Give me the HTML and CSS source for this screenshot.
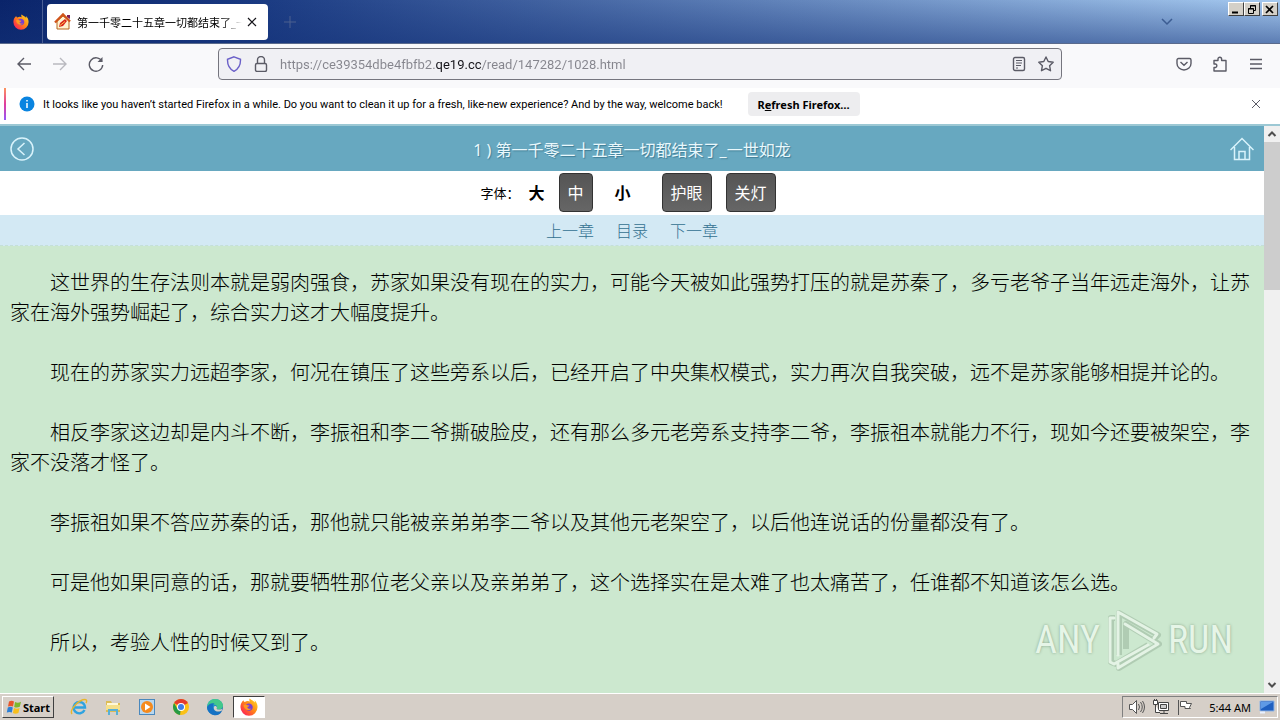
FILE: index.html
```html
<!DOCTYPE html>
<html lang="zh-CN">
<head>
  <meta charset="utf-8">
  <meta name="viewport" content="width=device-width, initial-scale=1.0">
  <title>第一千零二十五章一切都结束了_一世如龙</title>
  <link rel="stylesheet" href="styles.css">
</head>
<body>
  <!-- Gradients shared by the icons -->
  <svg class="defs" width="0" height="0" aria-hidden="true">
    <defs>
      <linearGradient id="foxFire" x1="1" y1="0" x2="0" y2="1">
        <stop offset="0" stop-color="#ffe226"/>
        <stop offset="0.45" stop-color="#ff8a16"/>
        <stop offset="0.8" stop-color="#ff3647"/>
        <stop offset="1" stop-color="#e31587"/>
      </linearGradient>
      <linearGradient id="edgeBlue" x1="0" y1="0" x2="1" y2="1">
        <stop offset="0" stop-color="#2fb4e8"/>
        <stop offset="1" stop-color="#0c59a4"/>
      </linearGradient>
      <symbol id="firefox" viewBox="0 0 16 16">
        <path d="M8.6.4c-.6 1-.4 2 .4 2.8C7.600 2.500 5.600 2.500 4.300 3.600 3.600 3.300 3.300 2.700 3.200 1.900 1.400 3.200.4 5.500.4 8.100a7.600 7.600 0 0 0 15.200 0c0-2.700-1-4.900-2.700-6.200.3.800.4 1.500.3 2.200C12.400 2.300 10.300 2 8.600.4z" fill="url(#foxFire)"/>
        <path d="M5 6.300c1.200-1.500 3.500-2 5-.8 1.900 1.500 1.700 4.200-.2 5.300-2 1.100-4.500.1-5.200-1.800-.3-1 0-2 .4-2.700z" fill="#7a3fd0"/>
        <path d="M3.200 6.200c1.300-.8 2.600-.5 3.400.2l1.700.3c-.1.800-1 1.200-1.800 1.400.2 1.400 1.800 2 3.500 1.200-.9 1.600-3.400 2-5 .6-1.200-1-1.900-2.300-1.800-3.700z" fill="#ff9a1f"/>
      </symbol>
    </defs>
  </svg>

  <!-- Tab strip -->
  <header class="titlebar">
    <button class="fx-view" aria-label="Firefox View"><svg width="16" height="16"><use href="#firefox"/></svg></button>
    <div class="tab">
      <svg width="18" height="18" viewBox="0 0 18 18">
        <path d="M3 8v8h12V7L9 3z" fill="#fff3cf" stroke="#b5651d"/>
        <path d="M1 9.500L9 1.500l7 7" fill="none" stroke="#d0541a" stroke-width="2.400"/>
        <path d="M5 14l1-4 5-4 2 2-4 5z" fill="#d8261c"/>
        <path d="M6 12.500l5-4" stroke="#ffc24a"/>
        <path d="M13 2h3v4l-3-2z" fill="#7d1f58"/>
      </svg>
      <span class="tab-title">第一千零二十五章一切都结束了_一世如龙</span>
      <button class="tab-close" aria-label="Close tab"><svg width="10" height="10" viewBox="0 0 10 10"><path d="M1 1l8 8M9 1L1 9" stroke="#15141a" stroke-width="1.200"/></svg></button>
    </div>
    <button class="new-tab" aria-label="New tab"><svg width="12" height="12" viewBox="0 0 12 12"><path d="M6 0v12M0 6h12" stroke="#4c608f"/></svg></button>
    <button class="all-tabs" aria-label="List all tabs"><svg width="12" height="8" viewBox="0 0 12 8"><path d="M1 1l5 5 5-5" fill="none" stroke="#3c5c92" stroke-width="1.500"/></svg></button>
    <div class="win-buttons">
      <button aria-label="Minimize"><svg width="10" height="9" viewBox="0 0 10 9"><path d="M1 7.500h6" stroke="#000" stroke-width="2"/></svg></button>
      <button aria-label="Restore"><svg width="10" height="9" viewBox="0 0 10 9" fill="none" stroke="#000"><path d="M3.500 3V.500h5v5H7M3 1h6M1.500 3.500h5v5h-5zM1 4h6"/></svg></button>
      <button class="win-close" aria-label="Close"><svg width="10" height="9" viewBox="0 0 10 9"><path d="M1 1l7 7M8 1L1 8" stroke="#000" stroke-width="1.700"/></svg></button>
    </div>
  </header>

  <!-- Navigation toolbar -->
  <nav class="toolbar">
    <div class="nav-buttons">
      <button aria-label="Back"><svg width="16" height="16" viewBox="0 0 16 16"><path d="M15 8H2M8 2L2 8l6 6"/></svg></button>
      <button class="off" aria-label="Forward" disabled><svg width="16" height="16" viewBox="0 0 16 16"><path d="M1 8h13M8 2l6 6-6 6"/></svg></button>
      <button aria-label="Reload"><svg width="16" height="16" viewBox="0 0 16 16"><path d="M14 5.500A6.700 6.700 0 1 0 14.700 9"/><path d="M14.500 1v5h-5z" fill="#5b5b66" stroke="none"/></svg></button>
    </div>
    <div class="urlbar">
      <svg class="shield" width="16" height="16" viewBox="0 0 16 16"><path d="M8 .8l6.500 2.500c.2 5.700-2 9.800-6.500 12-4.500-2.200-6.700-6.300-6.500-12z"/></svg>
      <svg width="14" height="16" viewBox="0 0 14 16"><rect x="1.500" y="7.500" width="11" height="8" rx="1.500"/><path d="M3.500 7V4a3.500 3.500 0 0 1 7 0v3"/></svg>
      <input type="text" class="url" aria-label="Address" value="https://ce39354dbe4fbfb2.qe19.cc/read/147282/1028.html">
      <button aria-label="Reader view"><svg width="14" height="16" viewBox="0 0 14 16"><rect x="1.500" y="1.500" width="11" height="13" rx="1.500"/><path d="M4 4.500h6M4 7h6M4 9.500h5M4 12h2" stroke-width="1.200"/></svg></button>
      <button aria-label="Bookmark this page"><svg width="16" height="16" viewBox="0 0 16 16"><path d="M8 1l2.200 4.500 5 .7-3.600 3.500.9 5L8 12.300l-4.500 2.400.9-5L.8 6.200l5-.7z" stroke-linejoin="round"/></svg></button>
    </div>
    <div class="tools">
      <button aria-label="Save to Pocket"><svg width="16" height="16" viewBox="0 0 16 16"><path d="M2.500 2.500h11a1.500 1.500 0 0 1 1.500 1.500v3.500a7 6.500 0 0 1-14 0V4a1.500 1.500 0 0 1 1.500-1.500zM4.500 6L8 9.300 11.500 6"/></svg></button>
      <button aria-label="Extensions"><svg width="16" height="16" viewBox="0 0 16 16"><path d="M2 15V11.500h1.500a1.800 1.800 0 0 0 0-3.500H2V4.500h4V3a1.800 1.800 0 0 1 3.600 0v1.500H14V15z" stroke-linejoin="round"/></svg></button>
      <button aria-label="Menu"><svg width="16" height="16" viewBox="0 0 16 16"><path d="M2 3.500h12M2 8h12M2 12.500h12"/></svg></button>
    </div>
  </nav>

  <!-- Notification bar -->
  <div class="infobar">
    <svg width="16" height="16" viewBox="0 0 16 16"><circle cx="8" cy="8" r="7.500" fill="#0a84e0"/><path d="M8 7v5M8 4v1.500" stroke="#fff" stroke-width="1.500"/></svg>
    <span>It looks like you haven’t started Firefox in a while. Do you want to clean it up for a fresh, like-new experience? And by the way, welcome back!</span>
    <button class="refresh">R<u>e</u>fresh Firefox…</button>
    <button class="info-close" aria-label="Dismiss"><svg width="10" height="10" viewBox="0 0 10 10"><path d="M1 1l8 8M9 1L1 9" stroke="#5b5b66"/></svg></button>
  </div>

  <div class="viewport">
    <main class="page">
      <div class="page-head">
        <a href="#" aria-label="返回"><svg width="24" height="24" viewBox="0 0 24 24"><circle cx="12" cy="12" r="11"/><path d="M14.500 6L8 12l6.500 6"/></svg></a>
        <h1>1 ) 第一千零二十五章一切都结束了_一世如龙</h1>
        <a href="#" aria-label="首页"><svg width="24" height="24" viewBox="0 0 24 24"><path d="M.500 13L12 1.500 23.500 13M4.500 10v12.500h15V10M9 22v-7.500h6V22"/></svg></a>
      </div>
      <div class="settings">
        <span>字体：</span>
        <button class="size">大</button>
        <button class="size on">中</button>
        <button class="size">小</button>
        <button class="mode">护眼</button>
        <button class="mode">关灯</button>
      </div>
      <div class="chapter-nav">
        <a href="#">上一章</a>
        <a href="#">目录</a>
        <a href="#">下一章</a>
      </div>
      <article class="content">
        <p>这世界的生存法则本就是弱肉强食，苏家如果没有现在的实力，可能今天被如此强势打压的就是苏秦了，多亏老爷子当年远走海外，让苏家在海外强势崛起了，综合实力这才大幅度提升。</p>
        <p>现在的苏家实力远超李家，何况在镇压了这些旁系以后，已经开启了中央集权模式，实力再次自我突破，远不是苏家能够相提并论的。</p>
        <p>相反李家这边却是内斗不断，李振祖和李二爷撕破脸皮，还有那么多元老旁系支持李二爷，李振祖本就能力不行，现如今还要被架空，李家不没落才怪了。</p>
        <p>李振祖如果不答应苏秦的话，那他就只能被亲弟弟李二爷以及其他元老架空了，以后他连说话的份量都没有了。</p>
        <p>可是他如果同意的话，那就要牺牲那位老父亲以及亲弟弟了，这个选择实在是太难了也太痛苦了，任谁都不知道该怎么选。</p>
        <p>所以，考验人性的时候又到了。</p>
      </article>
    </main>
    <div class="scrollbar">
      <svg width="16" height="16" viewBox="0 0 16 16"><path d="M4.500 10L8 6.500l3.500 3.500"/></svg>
      <div class="thumb"></div>
      <svg class="down" width="16" height="16" viewBox="0 0 16 16"><path d="M4.500 6L8 9.500 11.500 6"/></svg>
    </div>
    <div class="watermark">
      <span>ANY</span>
      <svg width="56" height="62" viewBox="0 0 56 62">
        <g fill="none" stroke="#86a38a" stroke-opacity=".4" stroke-width="6" stroke-linejoin="round">
          <path d="M9 9H5v44l5 2 32-19M13 46V4l39 22-4 4M13 54v5l40-24-33-20v25"/>
        </g>
        <g fill="none" stroke="#e4f3e5" stroke-width="3" stroke-linejoin="round" stroke-linecap="round">
          <path d="M8 9H4v44l4 2 34-19M12 46V3l39 22-3 4M12 55v4l40-24-33-20"/>
        </g>
      </svg>
      <span>RUN</span>
    </div>
  </div>

  <!-- Windows taskbar -->
  <footer class="taskbar">
    <button class="start">
      <svg width="16" height="16" viewBox="0 0 16 16"><path d="M3 2.500c2-1 3.500-.8 5 0L7 7.500c-1.500-.8-3-.8-5 0z" fill="#e8552b"/><path d="M9 3c2 1 4 .8 6-.2l-1.200 5c-2 1-4 1-5.600.2z" fill="#7db82c"/><path d="M1.800 8.500c2-1 3.500-.8 5 0l-1 5c-1.500-.8-3-.8-5 0z" fill="#2c7fd6"/><path d="M8 9c2 1 3.800.9 5.600 0l-1.200 5c-2 1-4 .8-5.500 0z" fill="#f8bf1c"/></svg>
      Start
    </button>
    <div class="quick">
      <button aria-label="Internet Explorer"><svg width="18" height="18" viewBox="0 0 18 18"><path d="M14.500 12A5.700 5.700 0 1 1 15 9.500H5" fill="none" stroke="#2fa3e0" stroke-width="2.400"/><path d="M2 16C-1 12 9 1.500 15 1.500c2 0 2 2 1 3.500" fill="none" stroke="#e8b62a" stroke-width="1.400"/></svg></button>
      <button aria-label="Explorer"><svg width="18" height="18" viewBox="0 0 18 18"><path d="M2 3h5l1 2h8v9H2z" fill="#dcbc55"/><path d="M3 5h11v3H3z" fill="#fff8d8"/><path d="M2 7h14v5H2z" fill="#f5e08c"/><path d="M4 17v-6h10v6h-2v-4H6v4z" fill="#58b0d6"/></svg></button>
      <button aria-label="Media Player"><svg width="18" height="18" viewBox="0 0 18 18"><rect x="1.500" y="1.500" width="15" height="15" fill="#b9d7ee" stroke="#4a88bd"/><circle cx="9" cy="9" r="6" fill="#f58a1d"/><path d="M7 5.500v7l5.500-3.500z" fill="#fff"/></svg></button>
      <button aria-label="Chrome"><svg width="18" height="18" viewBox="0 0 18 18"><circle cx="9" cy="9" r="8" fill="#fbc116"/><path d="M9 9L2.100 5A8 8 0 0 1 15.900 5z" fill="#e33b2e"/><path d="M9 9l-1 8A8 8 0 0 1 2.100 5l3.400 6z" fill="#269a45"/><circle cx="9" cy="9" r="4" fill="#fff"/><circle cx="9" cy="9" r="3" fill="#3e7de8"/></svg></button>
      <button aria-label="Edge"><svg width="18" height="18" viewBox="0 0 18 18"><circle cx="9" cy="9" r="8" fill="url(#edgeBlue)"/><path d="M1 9C2 3 5.500 1 9 1c5 0 8 3.500 8 6.500 0 3-2.500 4-4.500 4-2 0-2.500-.8-1.500-2 .5-2.500-3-4-6-2.500C3 7.800 1.500 9 1 9z" fill="#43c88c"/><path d="M1 9c1.500-3.500 5-4.500 7.500-3.500C6 7 6 13 11 14c2 .4 4 0 5-1-2 4-6 5-9 3.700C3.500 15.500 1 12.500 1 9z" fill="#1672c4"/><path d="M8 8.500c-1 3 1.500 5 4 5 2 0 3-.5 4.500-1.500l-1-1c-3 1.500-6 0-4.500-1.500-.3-1.500-2-2-3-1z" fill="#d6d1ca"/></svg></button>
      <button class="active" aria-label="Firefox"><svg width="18" height="18"><use href="#firefox"/></svg></button>
    </div>
    <div class="tray">
      <svg width="18" height="18" viewBox="0 0 18 18" fill="#fff" stroke="#555"><path d="M1.500 6.500h3l4-4v13l-4-4h-3z"/><path d="M10.500 6q2 3 0 6M12.500 4q3.500 5 0 10M14.500 3q4 6 0 12" fill="none"/></svg>
      <svg width="18" height="18" viewBox="0 0 18 18" fill="#fff" stroke="#444"><path d="M6.500 4.500h10v8h-10z"/><path d="M8.500 6.500h6v4h-6z" fill="#ccc"/><path d="M8 15.500h8M12 13v2M1.500 2.500h4v4h-4zM3.500 7v7.500H8M2.500 1v2M4.500 1v2"/></svg>
      <svg width="18" height="18" viewBox="0 0 18 18" fill="#fff" stroke="#555"><path d="M2.500 17V2M4.500 3.500h6v2h5l-2 4 1 1H9v-2H4.500z"/></svg>
      <time>5:44 AM</time>
      <svg width="16" height="14" viewBox="0 0 16 14"><path d="M1 1h14v10H1z" fill="#1f5fc0" stroke="#8fb4e4"/><path d="M2 2h12L2 9z" fill="#5f9ae6"/><path d="M1 12.500h5" stroke="#e8f0ff" stroke-width="2"/></svg>
    </div>
  </footer>
</body>
</html>
```
FILE: styles.css
```css
* {
  box-sizing: border-box;
}

body {
  margin: 0;
  height: 100vh;
  display: flex;
  flex-direction: column;
  overflow: hidden;
  font-family: "Noto Sans", "Noto Sans CJK SC", sans-serif;
  font-size: 11px;
  color: #000;
}

.defs {
  position: absolute;
}

button {
  display: flex;
  align-items: center;
  justify-content: center;
  padding: 0;
  border: none;
  background: none;
  font-family: inherit;
  color: inherit;
}

svg {
  flex: none;
}

/* Tab strip */
.titlebar {
  flex: none;
  display: flex;
  height: 44px;
  background: linear-gradient(to bottom, rgba(20, 50, 120, 0) 0%, rgba(20, 50, 120, 0.5) 100%),
    linear-gradient(to right, #0a246a, #1a3a82 20%, #a6caf0);
  border-bottom: 1px solid #5a6a8c;
}

.fx-view {
  width: 43px;
  border-right: 1px solid #4a5f95;
}

.tab {
  display: flex;
  align-items: center;
  gap: 5px;
  width: 221px;
  height: 36px;
  margin: 4px;
  padding: 0 11px 0 7px;
  background: #fff;
  border-radius: 4px;
}

.tab-title {
  flex: 1;
  overflow: hidden;
  white-space: nowrap;
  mask-image: linear-gradient(to right, #000 88%, transparent);
}

.new-tab {
  width: 36px;
}

.all-tabs {
  width: 30px;
  margin-left: auto;
}

.win-buttons {
  display: flex;
  margin: 2px 2px 0 46px;
}

.win-buttons button {
  width: 16px;
  height: 14px;
  background: #d4d0c8;
  border: 1px solid;
  border-color: #fff #404040 #404040 #fff;
}

.win-buttons .win-close {
  margin-left: 2px;
}

/* Navigation toolbar */
.toolbar {
  flex: none;
  display: flex;
  align-items: center;
  height: 44px;
  padding: 0 16px 4px;
  background: #f9f9fb;
}

.toolbar svg {
  fill: none;
  stroke: #5b5b66;
  stroke-width: 1.4;
}

.nav-buttons,
.tools {
  flex: 1;
  display: flex;
  gap: 20px;
}

.tools {
  justify-content: flex-end;
}

.off {
  opacity: 0.4;
}

.urlbar {
  display: flex;
  align-items: center;
  gap: 12px;
  width: 844px;
  max-width: 70%;
  height: 32px;
  padding: 0 7px;
  background: #f0f0f4;
  border: 1px solid #75757e;
  border-radius: 4px;
}

.toolbar .shield {
  stroke: #6a5fc8;
}

/* The host name is darker than the rest of the address */
.url {
  flex: 1;
  min-width: 0;
  padding: 0;
  border: none;
  outline: none;
  font-family: Roboto, sans-serif;
  font-size: 13px;
  color: transparent;
  background: linear-gradient(to right, #85858d 156px, #15141a 156px, #15141a 201px, #85858d 201px);
  background-clip: text;
  -webkit-background-clip: text;
}

/* Notification bar */
.infobar {
  flex: none;
  display: flex;
  align-items: center;
  height: 32px;
  margin: 0 4px 4px;
  padding: 0 15px 0 13px;
  background: #fff;
  border: solid;
  border-width: 0 0 0 2px;
  border-image: linear-gradient(to bottom, #ff9a5a, #e03c9c, #9059ff) 1;
}

.infobar span {
  margin: 0 25px 0 8px;
  font-family: Roboto, sans-serif;
  white-space: nowrap;
}

.refresh {
  width: 112px;
  height: 24px;
  font-size: 11px;
  font-weight: bold;
  background: #ededef;
  border-radius: 4px;
}

.info-close {
  margin-left: auto;
}

/* Web page */
.viewport {
  position: relative;
  flex: 1;
  min-height: 0;
  display: flex;
  border-top: 2px solid #9cc8d4;
}

.page {
  flex: 1;
  overflow: hidden;
  background: #cce8cf;
}

.page-head {
  display: flex;
  align-items: center;
  justify-content: space-between;
  height: 45px;
  padding: 0 10px;
  background: #67a8c0;
}

.page-head svg {
  display: block;
  fill: none;
  stroke: #d9f3fb;
  stroke-width: 1.5;
}

.page-head h1 {
  margin: 0;
  font-size: 16px;
  font-weight: 400;
  color: #e9f8fc;
  text-shadow: 1px 1px 1px #3f7d96;
}

.settings {
  display: flex;
  align-items: center;
  justify-content: center;
  height: 44px;
  padding: 0 8px 2px 0;
  font-size: 13px;
  background: #fff;
}

.settings button {
  height: 39px;
  font-size: 16px;
  font-weight: bold;
}

.size {
  width: 34px;
  margin-right: 13px;
}

.settings span + .size {
  margin-right: 5px;
}

.settings .on,
.settings .mode {
  font-weight: 400;
  color: #fff;
  background: linear-gradient(to bottom, #555, #666);
  border: 1px solid #333;
  border-radius: 4px;
}

.mode {
  width: 50px;
}

.mode + .mode {
  margin-left: 14px;
}

.size + .mode {
  margin-left: 9px;
}

.chapter-nav {
  display: flex;
  align-items: center;
  justify-content: center;
  gap: 22px;
  height: 31px;
  background: #d3e9f4;
  border-bottom: 1px dashed #c4dfd8;
}

.chapter-nav a {
  font-size: 16px;
  font-weight: 300;
  color: #327090;
  text-decoration: none;
}

.content {
  padding: 22px 10px;
  font-size: 20px;
  font-weight: 300;
  line-height: 30px;
}

.content p {
  margin: 0 0 30px;
  text-indent: 2em;
}

.scrollbar {
  display: flex;
  flex-direction: column;
  width: 16px;
  background: #f0f0f0;
}

.scrollbar svg {
  fill: none;
  stroke: #505050;
  stroke-width: 2;
}

.thumb {
  height: 148px;
  background: #cdcdcd;
}

.scrollbar .down {
  margin-top: auto;
}

/* Watermark over the page corner */
.watermark {
  position: absolute;
  right: 47px;
  bottom: 22px;
  display: flex;
  align-items: center;
  gap: 6px;
  font-family: "Roboto Condensed", Roboto, sans-serif;
  font-size: 38px;
  font-weight: 400;
  color: #e6f5e7;
  text-shadow: 0 0 3px #86a38a;
}

/* Taskbar */
.taskbar {
  flex: none;
  display: flex;
  align-items: center;
  height: 27px;
  background: #d6cfc8;
  border-top: 1px solid #fff;
}

.start {
  gap: 1px;
  width: 52px;
  height: 22px;
  margin-left: 2px;
  font-size: 11px;
  font-weight: bold;
  border: 1px solid;
  border-color: #fff #404040 #404040 #fff;
}

.quick {
  display: flex;
  gap: 2px;
  margin-left: 9px;
}

.quick button {
  width: 32px;
  height: 22px;
}

.quick .active {
  background: #fff;
  border: 1px solid;
  border-color: #404040 #fff #fff #404040;
}

.tray {
  display: flex;
  align-items: center;
  gap: 6px;
  height: 22px;
  margin: 0 2px 0 auto;
  padding: 0 2px 0 5px;
  border: 1px solid;
  border-color: #808080 #fff #fff #808080;
}

.tray time {
  margin: 0 2px 0 9px;
}
```
